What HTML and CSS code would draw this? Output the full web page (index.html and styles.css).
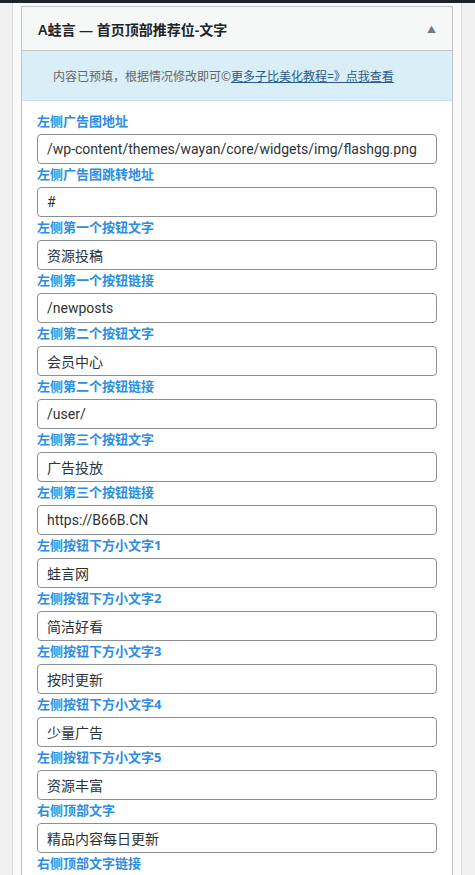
FILE: index.html
```html
<!DOCTYPE html>
<html lang="zh">
<head>
<meta charset="utf-8">
<title>Widget</title>
<link rel="stylesheet" href="styles.css">
</head>
<body>
<div class="topbar"></div>
<div class="sidebar">
  <div class="widget">
    <div class="widget-top">
      <h3 class="widget-title">A蛙言 — 首页顶部推荐位-文字</h3>
      <span class="toggle">▲</span>
    </div>
    <div class="notice">内容已预填，根据情况修改即可©<a href="#">更多子比美化教程=》点我查看</a></div>
    <div class="widget-body">
      <div class="field"><label class="lbl">左侧广告图地址</label><input class="inp" type="text" value="/wp-content/themes/wayan/core/widgets/img/flashgg.png"></div>
      <div class="field"><label class="lbl">左侧广告图跳转地址</label><input class="inp" type="text" value="#"></div>
      <div class="field"><label class="lbl">左侧第一个按钮文字</label><input class="inp" type="text" value="资源投稿"></div>
      <div class="field"><label class="lbl">左侧第一个按钮链接</label><input class="inp" type="text" value="/newposts"></div>
      <div class="field"><label class="lbl">左侧第二个按钮文字</label><input class="inp" type="text" value="会员中心"></div>
      <div class="field"><label class="lbl">左侧第二个按钮链接</label><input class="inp" type="text" value="/user/"></div>
      <div class="field"><label class="lbl">左侧第三个按钮文字</label><input class="inp" type="text" value="广告投放"></div>
      <div class="field"><label class="lbl">左侧第三个按钮链接</label><input class="inp" type="text" value="https://B66B.CN"></div>
      <div class="field"><label class="lbl">左侧按钮下方小文字1</label><input class="inp" type="text" value="蛙言网"></div>
      <div class="field"><label class="lbl">左侧按钮下方小文字2</label><input class="inp" type="text" value="简洁好看"></div>
      <div class="field"><label class="lbl">左侧按钮下方小文字3</label><input class="inp" type="text" value="按时更新"></div>
      <div class="field"><label class="lbl">左侧按钮下方小文字4</label><input class="inp" type="text" value="少量广告"></div>
      <div class="field"><label class="lbl">左侧按钮下方小文字5</label><input class="inp" type="text" value="资源丰富"></div>
      <div class="field"><label class="lbl">右侧顶部文字</label><input class="inp" type="text" value="精品内容每日更新"></div>
      <div class="field"><label class="lbl">右侧顶部文字链接</label><input class="inp" type="text" value="https://b66b.cn"></div>
    </div>
  </div>
</div>
</body>
</html>
```
FILE: styles.css
```css
html, body {
  margin: 0;
  padding: 0;
}
body {
  background: #f0f0f1;
  font-family: "Noto Sans", "Noto Sans CJK SC", sans-serif;
  color: #3c434a;
  height: 875px;
  overflow: hidden;
}
.topbar {
  height: 3px;
  background: #1d2327;
}
.sidebar {
  margin-left: 12px;
  border-left: 1px solid #dcdcde;
  border-right: 1px solid #dcdcde;
  background: #f9f9f9;
  padding: 3px 8px 0;
  box-sizing: border-box;
  width: 450px;
  min-height: 872px;
}
.widget {
  border: 1px solid #c3c4c7;
  background: #fff;
}
.widget-top {
  height: 43px;
  background: #f6f7f7;
  border-bottom: 1px solid #c3c4c7;
  display: flex;
  align-items: center;
  justify-content: space-between;
  padding: 0 16px;
}
.widget-title {
  margin: 0;
  font-size: 14px;
  font-weight: 600;
  color: #1d2327;
  font-family: "Noto Sans", "Noto Sans CJK SC", sans-serif;
}
.toggle {
  font-size: 9px;
  color: #787c82;
  padding-top: 1px;
}
.notice {
  background: #d9eef7;
  border-bottom: 1px solid #c5e3f0;
  box-sizing: border-box;
  height: 50px;
  display: flex;
  align-items: center;
  padding-left: 31px;
  font-size: 12px;
  color: #666;
}
.notice a {
  color: #2a5a8c;
  text-decoration: underline;
}
.widget-body {
  padding: 10px 15px 20px;
}
.field {
  display: flex;
  flex-direction: column;
}
.lbl {
  display: block;
  font-size: 13px;
  font-weight: 700;
  color: #2c8de3;
  line-height: 20px;
  height: 20px;
  padding-bottom: 3px;
}
.inp {
  height: 30px;
  box-sizing: border-box;
  width: 400px;
  border: 1px solid #8c8f94;
  border-radius: 4px;
  padding: 0 9px;
  font-size: 14px;
  font-family: Roboto, "Noto Sans CJK SC", sans-serif;
  color: #2c3338;
  background: #fff;
  margin: 0;
  outline: none;
}
```
